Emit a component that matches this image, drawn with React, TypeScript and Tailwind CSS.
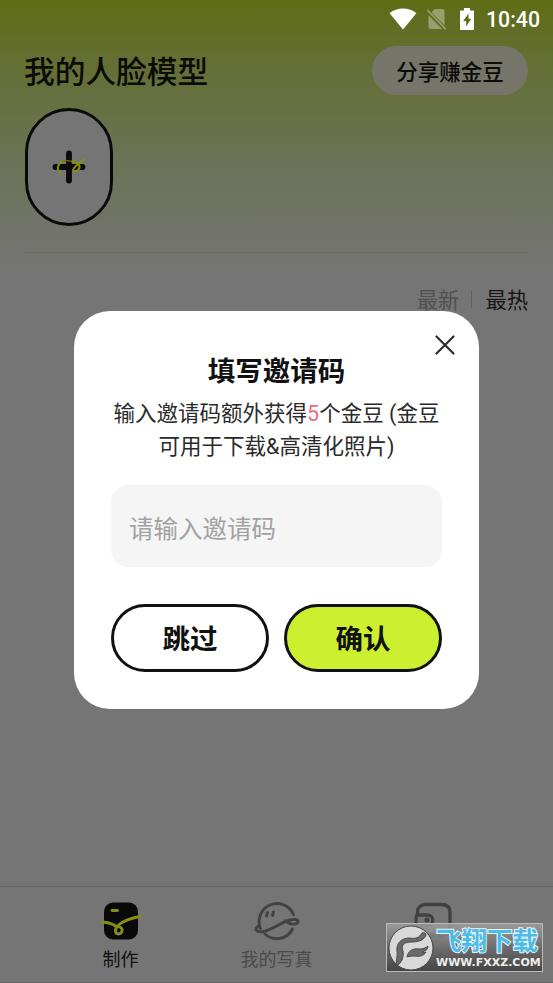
import React, { FC, ReactNode } from 'react'

const FONT = 'font-[Roboto,"Noto_Sans_CJK_SC",sans-serif]'

const StatusBar: FC = () => (
  <div className="flex h-[38px] items-center justify-end pr-[13px] text-white">
    <svg width="28" height="22" viewBox="0 0 28 22" fill="currentColor">
      <path d="M14 21.5 0.6 5.2C4.4 2.1 9 .6 14 .6s9.600 1.500 13.400 4.600Z" />
    </svg>
    <svg className="ml-[9px] opacity-35" width="21" height="24" viewBox="0 0 21 24" fill="currentColor">
      <path d="M9 2h7.500a2 2 0 0 1 2 2v14.500L5.500 5.200ZM2.500 8.200 16 22H4.500a2 2 0 0 1-2-2Z" />
      <path d="m1.300 3 18.400 19.200" stroke="currentColor" strokeWidth="1.800" />
    </svg>
    <svg className="ml-[12px]" width="16" height="24" viewBox="0 0 16 24">
      <path d="M5 1h6v2.500h3.300c.4 0 .7.300.7.700v18.100c0 .4-.3.700-.7.700H1.700a.7.700 0 0 1-.7-.7V4.200c0-.4.300-.7.700-.7H5Z" fill="currentColor" />
      <path d="M9.500 6.500 4.200 14h3v5.500l5-7.800H9.500Z" fill="#5f6c16" />
    </svg>
    <span className="ml-[11px] pt-px text-[21.3px] font-medium leading-none">10:40</span>
  </div>
)

const AddFaceButton: FC = () => (
  <button className="flex h-[118px] w-[88px] items-center justify-center rounded-full border-[3px] border-[#0a0b08] bg-[#757575]">
    <svg width="34" height="34" viewBox="0 0 34 34" fill="none" strokeLinecap="round">
      <path d="M3.500 17h27M17 3.500v27" stroke="#0a0b08" strokeWidth="5.800" />
      <g stroke="#8a8f0c" strokeWidth="2">
        <path d="M9 23.500C3.500 19.500 6 13 11 11.500" />
        <path d="M20 11.500c7 .5 9 5 6.500 8-2 2.500-6.500 2-5-.5 1.500-3 6-6 10-9.500" />
      </g>
      <path d="M11 11.500c3-1.200 6-1 9 0" stroke="#6b7008" strokeWidth="1.200" />
    </svg>
  </button>
)

interface TabProps {
  label?: string
  active?: boolean
  children: ReactNode
}

const Tab: FC<TabProps> = ({ label, active, children }) => (
  <div className={`flex w-[156px] flex-col items-center pt-[11px] ${active ? 'text-[#111]' : 'text-[#4b4b4b]'}`}>
    <div className="flex h-[46px] items-center">{children}</div>
    {label ? <span className="mt-[4px] text-[18px] leading-6">{label}</span> : null}
  </div>
)

const TabBar: FC = () => (
  <nav className="flex h-[97px] justify-center border-t border-b border-t-[#646464] border-b-[#6a6a6a]">
    <Tab label="制作" active>
      <svg width="42" height="40" viewBox="0 0 42 40" fill="none">
        <rect x="4" y="1.500" width="34" height="37" rx="9" fill="#080908" />
        <g stroke="#858c17" strokeWidth="2.900" strokeLinecap="round">
          <path d="M12 9.500h5.500" />
          <path d="M2 21c6.500.5 11 1.500 14 4.500" />
          <path d="M40 15.500c-8 1.500-16 4-21.500 8.500-4 3.500-4 9 0 9s5-5.500 1.500-7c-1.500-.7-3-.7-4-.5" />
        </g>
      </svg>
    </Tab>
    <Tab label="我的写真">
      <svg width="46" height="40" viewBox="0 0 46 40" fill="none" stroke="#424242" strokeWidth="2.900" strokeLinecap="round">
        <path d="M39.500 13.500A17.500 17.500 0 0 0 6.500 27.500M11 33a17.500 17.500 0 0 0 27.500-5" />
        <path d="M4.500 25c-5 3-2 7 5 5.500C19 29 29 20 36 19c4-1 8-1 8 1.500s-5 3-8 2.200l-5-3" />
        <path d="m13.500 11.500-1 3.500M19.500 11l-1 3.500" />
      </svg>
    </Tab>
    <Tab>
      <svg width="40" height="40" viewBox="0 0 40 40" fill="none" stroke="#414141" strokeWidth="3.300">
        <path d="M4.500 15V11.500c0-5 3-8 8-8h16c6 0 8.500 3 8.500 8v15c0 5-3 8-8 8H13c-6 0-9-3-9-8" />
        <path d="M4 25.500C2.500 23 2.500 14 5 14h9.500a5.200 5.200 0 0 1 0 10.500H4" />
        <circle cx="14" cy="19" r="2.500" fill="#414141" stroke="none" />
      </svg>
    </Tab>
  </nav>
)

const InviteDialog: FC = () => (
  <div className="absolute inset-0 flex items-start justify-center pt-[311px]">
    <section className="flex h-[398px] w-[405px] flex-col rounded-[36px] bg-white px-[37px] pt-[24px]">
      <svg className="-mr-[13px] self-end" width="20" height="20" viewBox="0 0 20 20" stroke="#2d2d2d" strokeWidth="2.200" strokeLinecap="round">
        <path d="m1.500 1.500 17 17M18.500 1.500l-17 17" />
      </svg>
      <h2 className="mt-px text-center text-[27.5px] font-bold leading-[32px] text-[#111]">填写邀请码</h2>
      <p className="mt-[10px] whitespace-nowrap text-center text-[21.500px] leading-[32.500px] text-[#2a2a2a]">
        输入邀请码额外获得<span className="text-[#ee6a80]">5</span>个金豆 (金豆
        <br />
        可用于下载&amp;高清化照片)
      </p>
      <div className="mt-[22px] flex h-[82px] items-center rounded-[17px] bg-[#f5f5f5] px-[18px] pt-2 text-[24.500px] text-[#a2a2a2]">
        请输入邀请码
      </div>
      <div className="mt-[37px] flex justify-between text-[27.500px] font-bold text-[#111]">
        <button className="h-[68px] w-[158px] rounded-full border-[3px] border-[#111] pt-1">跳过</button>
        <button className="h-[68px] w-[158px] rounded-full border-[3px] border-[#111] bg-[#ccef2f] pt-1">确认</button>
      </div>
    </section>
  </div>
)

const Watermark: FC = () => (
  <div className="absolute bottom-[11px] right-[10px] flex h-[49px] w-[157px] items-center border border-[#bbb] bg-linear-to-b from-[#a0a0a0]/85 to-[#3c3c3c]/85">
    <svg className="ml-px shrink-0" width="46" height="46" viewBox="0 0 46 46">
      <circle cx="23" cy="23" r="22" fill="#d9d9d9" stroke="#444" />
      <path
        d="M9 41c-2-6 1-9 0-15-1-8 5-13 12-13 7 1 10 0 13-5 2-1 4 0 4 2-2 6-9 7-15 7-8 0-10 4-8 9 1 6-1 11-6 15Z"
        fill="#6a6a6a"
        stroke="#4a4a4a"
      />
      <path
        d="M19 32c1-6 6-9 12-8 4 0 7-1 9-3 0 4-3 5-6 6 1 1 3 1 4 0-2 4-7 5-11 4-3 0-5 0-8 1Z"
        fill="#6a6a6a"
        stroke="#4a4a4a"
      />
    </svg>
    <div className="ml-[2px] flex flex-col whitespace-nowrap">
      <span className="text-[25.500px] font-bold leading-[30px] text-[#4dbbe6] [-webkit-text-stroke:2px_#e4f6fc] [paint-order:stroke_fill]">
        飞翔下载
      </span>
      <span className='font-["DejaVu_Sans",sans-serif] text-[11px] font-bold leading-[14px] text-[#eee]'>WWW.FXXZ.COM</span>
    </div>
  </div>
)

export default function App() {
  return (
    <div className={`relative flex h-[983px] w-[553px] flex-col overflow-hidden bg-[#757575] ${FONT}`}>
      <div className="h-[270px] bg-linear-to-b from-[#5f6c12] to-[#757575]">
        <StatusBar />
        <header className="flex h-[62px] items-start justify-between pl-6 pr-[25px] pt-2">
          <h1 className="pt-[4px] text-[30.700px] font-medium leading-[46px] text-[#0b0c08]">我的人脸模型</h1>
          <button className="h-[49px] w-[156px] rounded-full bg-[#757569] pt-[5px] text-[21.500px] font-medium text-[#0b0c08]">
            分享赚金豆
          </button>
        </header>
        <div className="mx-[25px] h-[153px] border-b border-[#6c6d64] pt-2">
          <AddFaceButton />
        </div>
      </div>
      <main className="flex flex-1 items-start justify-end pr-[25px] pt-[15px] text-[21.300px] leading-8">
        <span className="text-[#505050]">最新</span>
        <span className="ml-[12px] mr-[13px] mt-[5px] h-[18px] w-px bg-[#606060]" />
        <span className="text-[#151515]">最热</span>
      </main>
      <TabBar />
      <InviteDialog />
      <Watermark />
    </div>
  )
}
